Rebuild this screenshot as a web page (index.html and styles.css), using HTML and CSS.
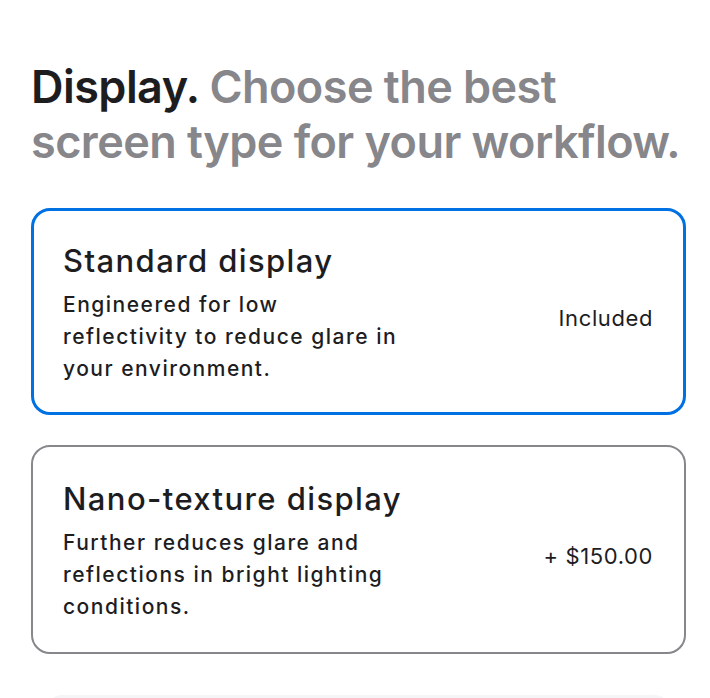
FILE: index.html
```html
<!DOCTYPE html>
<html lang="en">
<head>
<meta charset="utf-8">
<title>Display</title>
<link rel="stylesheet" href="styles.css">
</head>
<body>
<main class="section">
  <h2 class="headline"><span class="strong">Display.</span> Choose the best screen type for your workflow.</h2>
  <div class="options">
    <label class="option selected">
      <div class="option-text">
        <div class="option-title">Standard display</div>
        <div class="option-desc">Engineered for low reflectivity to reduce glare in your environment.</div>
      </div>
      <div class="option-price">Included</div>
    </label>
    <label class="option">
      <div class="option-text">
        <div class="option-title">Nano-texture display</div>
        <div class="option-desc">Further reduces glare and reflections in bright lighting conditions.</div>
      </div>
      <div class="option-price">+ $150.00</div>
    </label>
  </div>
  <div class="next-box"></div>
</main>
</body>
</html>
```

FILE: styles.css
```css
html, body {
  margin: 0;
  padding: 0;
  background: #ffffff;
}
body {
  font-family: Inter, "Noto Sans", "Liberation Sans", sans-serif;
  color: #1d1d1f;
  -webkit-font-smoothing: antialiased;
}
.section {
  padding: 59px 0 0 31px;
}
.headline {
  margin: 0;
  font-size: 45px;
  line-height: 55px;
  font-weight: 600;
  letter-spacing: -0.55px;
  color: #86868b;
  max-width: 672px;
}
.strong {
  color: #1d1d1f;
}
.options {
  margin-top: 39px;
  display: flex;
  flex-direction: column;
  gap: 30px;
  width: 655px;
}
.option {
  display: flex;
  justify-content: space-between;
  align-items: flex-start;
  gap: 20px;
  border: 2px solid #86868b;
  border-radius: 19px;
  padding: 33px 31px 29px 30px;
  box-sizing: border-box;
}
.option.selected {
  border: 3px solid #0071e3;
  padding: 31px 30px 27px 29px;
}
.option-text {
  flex: 1;
}
.option-title {
  font-size: 31px;
  line-height: 38px;
  font-weight: 500;
  letter-spacing: 1.4px;
  margin-bottom: 9px;
}
.option-desc {
  width: 338px;
  font-size: 21px;
  line-height: 32px;
  font-weight: 500;
  letter-spacing: 1.5px;
}
.option-price {
  align-self: center;
  margin-top: 8px;
  font-size: 22px;
  line-height: 28px;
  font-weight: 400;
  letter-spacing: 0.6px;
  white-space: nowrap;
}
.next-box {
  margin: 41px 0 0 14px;
  width: 627px;
  height: 60px;
  border-radius: 18px;
  background: #f5f5f7;
}
```
